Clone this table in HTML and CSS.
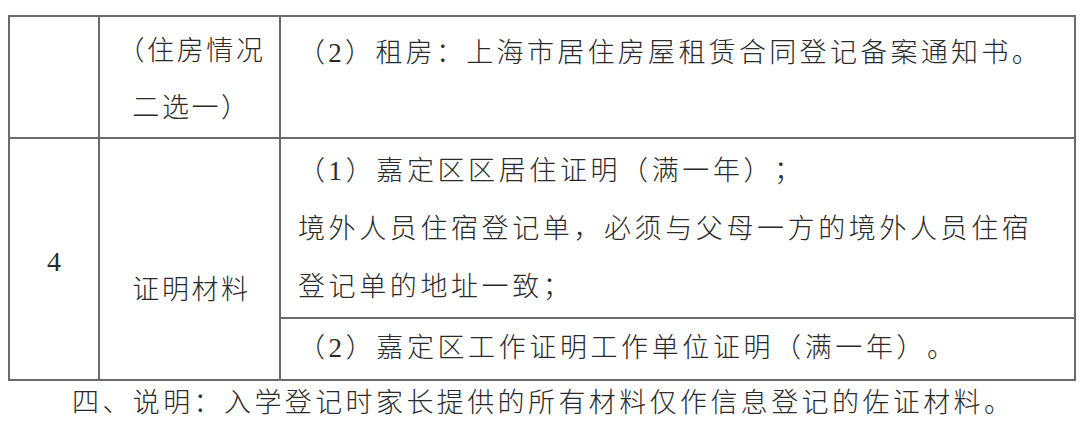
FILE: index.html
```html
<!DOCTYPE html>
<html lang="zh-CN">
<head>
<meta charset="utf-8">
<title>证明材料</title>
<link rel="stylesheet" href="styles.css">
</head>
<body>
<div class="page">
  <table class="doc-table">
    <colgroup>
      <col class="c-num">
      <col class="c-name">
      <col class="c-desc">
    </colgroup>
    <tbody>
      <tr class="row-house">
        <td class="cell-num"></td>
        <td class="cell-name">（住房情况<br>二选一）</td>
        <td class="cell-desc desc-top"><p>（2）租房：上海市居住房屋租赁合同登记备案通知书。</p></td>
      </tr>
      <tr class="row-proof-a">
        <td class="cell-num num-4" rowspan="2">4</td>
        <td class="cell-name name-proof" rowspan="2">证明材料</td>
        <td class="cell-desc desc-a">
          <p>（1）嘉定区区居住证明（满一年）；</p>
          <p>境外人员住宿登记单，必须与父母一方的境外人员住宿登记单的地址一致；</p>
        </td>
      </tr>
      <tr class="row-proof-b">
        <td class="cell-desc desc-b"><p>（2）嘉定区工作证明工作单位证明（满一年）。</p></td>
      </tr>
    </tbody>
  </table>
  <p class="note">四、说明：入学登记时家长提供的所有材料仅作信息登记的佐证材料。</p>
</div>
</body>
</html>
```

FILE: styles.css
```css
html, body {
  margin: 0;
  padding: 0;
  background: #ffffff;
}

body {
  font-family: "Liberation Serif", "Noto Sans CJK SC", serif;
  font-weight: 300;
  color: #2a2a2a;
  font-size: 27px;
  text-spacing-trim: space-all;
}

.page {
  padding: 15px 6px 0 8px;
}

.doc-table {
  border-collapse: collapse;
  width: 1066px;
  table-layout: fixed;
}

.c-num { width: 90px; }
.c-name { width: 181px; }
.c-desc { width: 795px; }

.doc-table td {
  border: 2px solid #6a6a6a;
  padding: 0;
  vertical-align: top;
}

.doc-table p {
  margin: 0;
}

.cell-num {
  text-align: center;
  vertical-align: middle;
}

.num-4 {
  vertical-align: middle !important;
  padding-top: 6px !important;
  font-size: 28px;
  line-height: 58px;
}

.cell-name {
  text-align: center;
  letter-spacing: 2.6px;
  line-height: 57px;
  padding: 6px 0 0 4px !important;
}

.name-proof {
  vertical-align: middle !important;
  padding: 62px 0 0 4px !important;
  line-height: 58px;
}

.cell-desc {
  letter-spacing: 3.6px;
  padding: 6px 19px 0 17px !important;
  line-height: 57px;
  text-align: left;
}

.desc-top {
  padding-top: 8px !important;
  letter-spacing: 3.3px;
}

.desc-top p {
  white-space: nowrap;
}

.desc-a {
  padding: 3px 19px 1px 17px !important;
  line-height: 58px;
}

.desc-b {
  padding: 0 19px 2px 17px !important;
  line-height: 58px;
}

.note {
  margin: 0;
  padding-left: 64px;
  letter-spacing: 3.4px;
  line-height: 44px;
}
```
